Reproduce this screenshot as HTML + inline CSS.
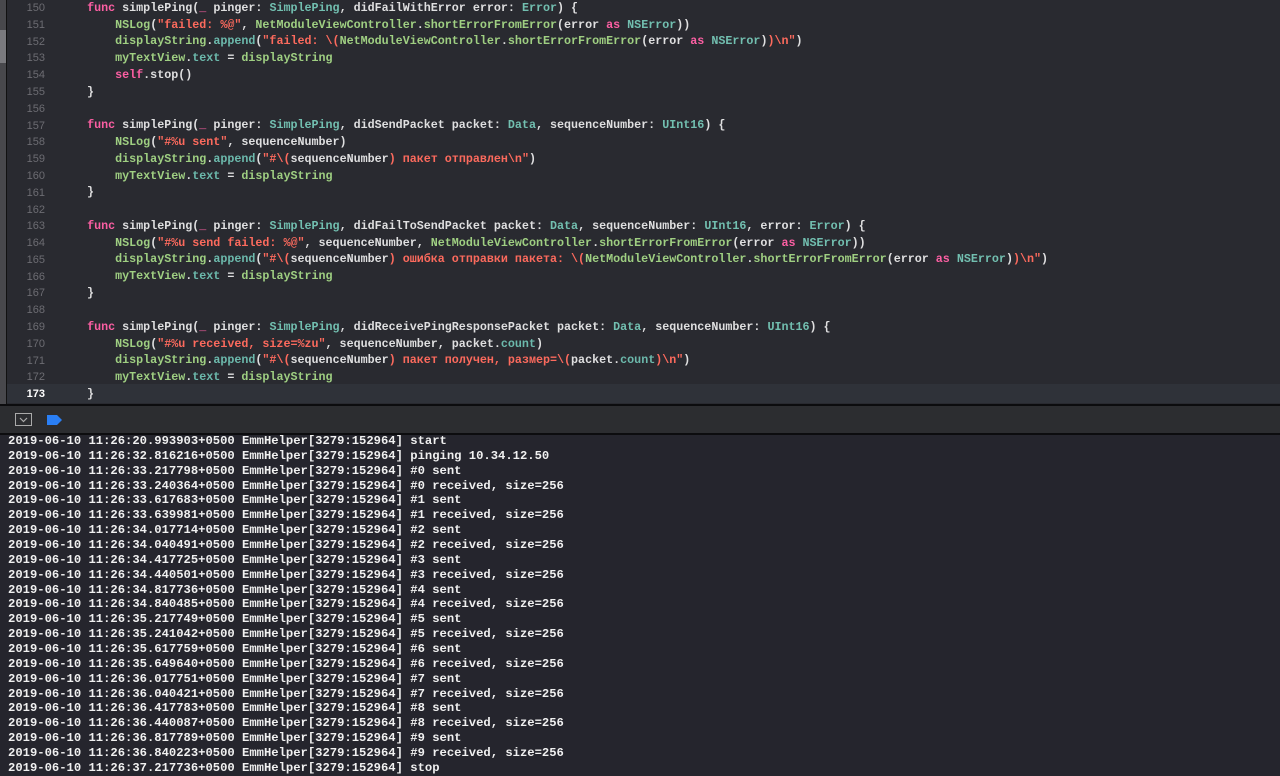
<!DOCTYPE html>
<html><head><meta charset="utf-8"><style>
body{margin:0;width:1280px;height:776px;overflow:hidden;background:#25252d;font-family:"Liberation Mono","DejaVu Sans Mono",monospace;font-weight:bold;}
#code{position:absolute;left:0;top:0;width:1280px;height:405px;background:#292a30;}
#strip{position:absolute;left:0;top:0;width:6px;height:405px;background:#48484c;border-right:1px solid #111;}
#thumb{position:absolute;left:0;top:30px;width:6px;height:33px;background:#7a7a7e;}
#wrap{position:absolute;left:0;top:2px;width:1280px;height:402px;}
.ln{position:absolute;left:7px;width:38px;text-align:right;color:#6c6c72;font-size:11px;font-family:"Liberation Sans",sans-serif;font-weight:normal;}
.cl{position:absolute;left:59px;white-space:pre;font-size:11.7px;color:#dfdfe0;}
.cur{position:absolute;left:7px;width:1273px;top:384px;height:19px;background:#2f3239;}
.k{color:#fc5fa3}.s{color:#fc6a5d}.g{color:#9fcf82}.t{color:#6cb9ac}.y{color:#72bfb0}
#sep1{position:absolute;top:404px;left:0;width:1280px;height:2px;background:#0c0c0e;}
#bar{position:absolute;top:406px;left:0;width:1280px;height:27px;background:#2c2d30;}
#sep2{position:absolute;top:433px;left:0;width:1280px;height:2px;background:#0c0c0e;}
#con{position:absolute;top:434px;left:8px;font-size:12.2px;line-height:14.86px;color:#f0f0f0;white-space:pre;}
</style></head><body>
<div id="code">
<div class="cur"></div>
<div id="strip"></div><div id="thumb"></div>
</div>
<div id="sep1"></div>
<div id="bar">
<svg style="position:absolute;left:15px;top:7px" width="18" height="14"><rect x="0.5" y="0.5" width="16" height="12" fill="none" stroke="#aaa"/><path d="M5 5 L8.5 8.5 L12 5" fill="none" stroke="#aaa" stroke-width="1.2"/></svg>
<svg style="position:absolute;left:47px;top:9px" width="16" height="10"><path d="M0 0 H10 L15 5 L10 10 H0 Z" fill="#2a7ff5"/></svg>
</div>
<div id="sep2"></div>
<div id="con">2019-06-10 11:26:20.993903+0500 EmmHelper[3279:152964] start
2019-06-10 11:26:32.816216+0500 EmmHelper[3279:152964] pinging 10.34.12.50
2019-06-10 11:26:33.217798+0500 EmmHelper[3279:152964] #0 sent
2019-06-10 11:26:33.240364+0500 EmmHelper[3279:152964] #0 received, size=256
2019-06-10 11:26:33.617683+0500 EmmHelper[3279:152964] #1 sent
2019-06-10 11:26:33.639981+0500 EmmHelper[3279:152964] #1 received, size=256
2019-06-10 11:26:34.017714+0500 EmmHelper[3279:152964] #2 sent
2019-06-10 11:26:34.040491+0500 EmmHelper[3279:152964] #2 received, size=256
2019-06-10 11:26:34.417725+0500 EmmHelper[3279:152964] #3 sent
2019-06-10 11:26:34.440501+0500 EmmHelper[3279:152964] #3 received, size=256
2019-06-10 11:26:34.817736+0500 EmmHelper[3279:152964] #4 sent
2019-06-10 11:26:34.840485+0500 EmmHelper[3279:152964] #4 received, size=256
2019-06-10 11:26:35.217749+0500 EmmHelper[3279:152964] #5 sent
2019-06-10 11:26:35.241042+0500 EmmHelper[3279:152964] #5 received, size=256
2019-06-10 11:26:35.617759+0500 EmmHelper[3279:152964] #6 sent
2019-06-10 11:26:35.649640+0500 EmmHelper[3279:152964] #6 received, size=256
2019-06-10 11:26:36.017751+0500 EmmHelper[3279:152964] #7 sent
2019-06-10 11:26:36.040421+0500 EmmHelper[3279:152964] #7 received, size=256
2019-06-10 11:26:36.417783+0500 EmmHelper[3279:152964] #8 sent
2019-06-10 11:26:36.440087+0500 EmmHelper[3279:152964] #8 received, size=256
2019-06-10 11:26:36.817789+0500 EmmHelper[3279:152964] #9 sent
2019-06-10 11:26:36.840223+0500 EmmHelper[3279:152964] #9 received, size=256
2019-06-10 11:26:37.217736+0500 EmmHelper[3279:152964] stop</div>
<div id="wrap">
<div class="ln" style="top:0px">150</div><div class="cl" style="top:-1px">    <span class="k">func</span> simplePing(<span class="k">_</span> pinger: <span class="y">SimplePing</span>, didFailWithError error: <span class="y">Error</span>) {</div>
<div class="ln" style="top:17px">151</div><div class="cl" style="top:16px">        <span class="g">NSLog</span>(<span class="s">"failed: %@"</span>, <span class="g">NetModuleViewController</span>.<span class="g">shortErrorFromError</span>(error <span class="k">as</span> <span class="y">NSError</span>))</div>
<div class="ln" style="top:34px">152</div><div class="cl" style="top:32px">        <span class="g">displayString</span>.<span class="t">append</span>(<span class="s">"failed: \(</span><span class="g">NetModuleViewController</span>.<span class="g">shortErrorFromError</span>(error <span class="k">as</span> <span class="y">NSError</span>)<span class="s">)\n"</span>)</div>
<div class="ln" style="top:50px">153</div><div class="cl" style="top:49px">        <span class="g">myTextView</span>.<span class="t">text</span> = <span class="g">displayString</span></div>
<div class="ln" style="top:67px">154</div><div class="cl" style="top:66px">        <span class="k">self</span>.stop()</div>
<div class="ln" style="top:84px">155</div><div class="cl" style="top:83px">    }</div>
<div class="ln" style="top:101px">156</div>
<div class="ln" style="top:118px">157</div><div class="cl" style="top:116px">    <span class="k">func</span> simplePing(<span class="k">_</span> pinger: <span class="y">SimplePing</span>, didSendPacket packet: <span class="y">Data</span>, sequenceNumber: <span class="y">UInt16</span>) {</div>
<div class="ln" style="top:134px">158</div><div class="cl" style="top:133px">        <span class="g">NSLog</span>(<span class="s">"#%u sent"</span>, sequenceNumber)</div>
<div class="ln" style="top:151px">159</div><div class="cl" style="top:150px">        <span class="g">displayString</span>.<span class="t">append</span>(<span class="s">"#\(</span>sequenceNumber<span class="s">) пакет отправлен\n"</span>)</div>
<div class="ln" style="top:168px">160</div><div class="cl" style="top:167px">        <span class="g">myTextView</span>.<span class="t">text</span> = <span class="g">displayString</span></div>
<div class="ln" style="top:185px">161</div><div class="cl" style="top:183px">    }</div>
<div class="ln" style="top:202px">162</div>
<div class="ln" style="top:218px">163</div><div class="cl" style="top:217px">    <span class="k">func</span> simplePing(<span class="k">_</span> pinger: <span class="y">SimplePing</span>, didFailToSendPacket packet: <span class="y">Data</span>, sequenceNumber: <span class="y">UInt16</span>, error: <span class="y">Error</span>) {</div>
<div class="ln" style="top:235px">164</div><div class="cl" style="top:234px">        <span class="g">NSLog</span>(<span class="s">"#%u send failed: %@"</span>, sequenceNumber, <span class="g">NetModuleViewController</span>.<span class="g">shortErrorFromError</span>(error <span class="k">as</span> <span class="y">NSError</span>))</div>
<div class="ln" style="top:252px">165</div><div class="cl" style="top:250px">        <span class="g">displayString</span>.<span class="t">append</span>(<span class="s">"#\(</span>sequenceNumber<span class="s">) ошибка отправки пакета: \(</span><span class="g">NetModuleViewController</span>.<span class="g">shortErrorFromError</span>(error <span class="k">as</span> <span class="y">NSError</span>)<span class="s">)\n"</span>)</div>
<div class="ln" style="top:269px">166</div><div class="cl" style="top:267px">        <span class="g">myTextView</span>.<span class="t">text</span> = <span class="g">displayString</span></div>
<div class="ln" style="top:285px">167</div><div class="cl" style="top:284px">    }</div>
<div class="ln" style="top:302px">168</div>
<div class="ln" style="top:319px">169</div><div class="cl" style="top:318px">    <span class="k">func</span> simplePing(<span class="k">_</span> pinger: <span class="y">SimplePing</span>, didReceivePingResponsePacket packet: <span class="y">Data</span>, sequenceNumber: <span class="y">UInt16</span>) {</div>
<div class="ln" style="top:336px">170</div><div class="cl" style="top:335px">        <span class="g">NSLog</span>(<span class="s">"#%u received, size=%zu"</span>, sequenceNumber, packet.<span class="t">count</span>)</div>
<div class="ln" style="top:353px">171</div><div class="cl" style="top:351px">        <span class="g">displayString</span>.<span class="t">append</span>(<span class="s">"#\(</span>sequenceNumber<span class="s">) пакет получен, размер=\(</span>packet.<span class="t">count</span><span class="s">)\n"</span>)</div>
<div class="ln" style="top:369px">172</div><div class="cl" style="top:368px">        <span class="g">myTextView</span>.<span class="t">text</span> = <span class="g">displayString</span></div>
<div class="ln" style="top:386px;color:#fff;font-weight:bold">173</div><div class="cl" style="top:385px">    }</div>
</div>
</body></html>
